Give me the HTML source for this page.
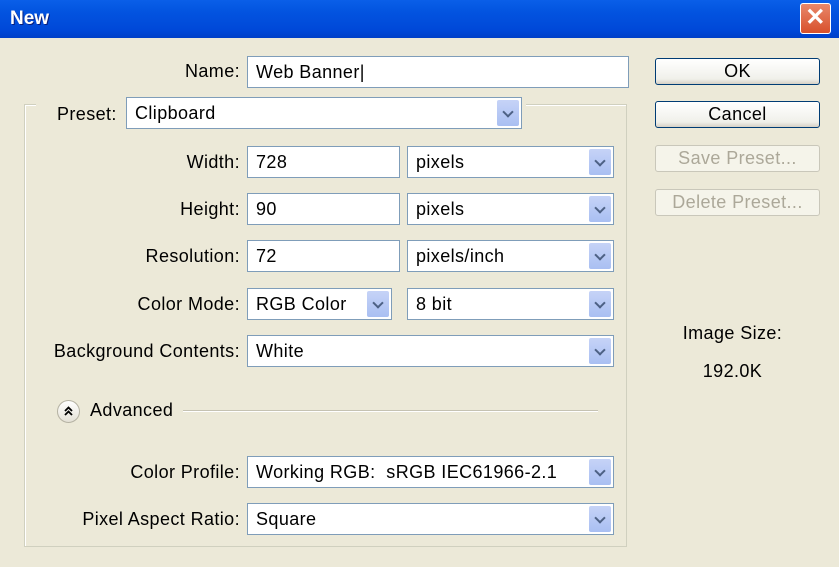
<!DOCTYPE html>
<html><head><style>
*{box-sizing:border-box;margin:0;padding:0}
body{width:839px;height:567px;background:#ECE9D8;font-family:"Liberation Sans",sans-serif;font-size:18px;letter-spacing:0.4px;color:#000;position:relative;overflow:hidden}
.t{position:absolute;top:0;left:0;width:839px;height:38px;background:linear-gradient(#0A5FE8,#0354E0 30%,#0048D8 80%,#0040C8)}
.t span{position:absolute;left:10px;top:8px;color:#fff;font-weight:bold;font-size:19px;text-shadow:1px 1px #0a1e7a;letter-spacing:0}
.x{position:absolute;left:800px;top:3px;width:31px;height:31px;background:linear-gradient(#E8876A,#D8502B);border:1px solid #fff;border-radius:3px;color:#fff;font-size:24px;text-align:center;line-height:28px;font-weight:bold}
.l{position:absolute;text-align:right;width:240px;left:0;line-height:20px}
.i{position:absolute;background:#fff;border:1px solid #7F9DB9;padding-left:8px;line-height:30px;height:32px}
.a{position:absolute;right:2px;top:2px;width:22px;height:26px;background:linear-gradient(#C6D3F7,#A9BFF2);border-radius:2px}
.a:after{content:"";position:absolute;left:7px;top:8px;width:6px;height:6px;border-right:2px solid #4D6185;border-bottom:2px solid #4D6185;transform:rotate(45deg)}
.b{position:absolute;left:655px;width:165px;height:27px;border:1px solid #003C74;border-radius:3px;background:linear-gradient(#fff,#F0F0EA 80%,#D6D0C5);text-align:center;line-height:25px}
.d{border-color:#C9C7BA;color:#ACA899;background:#F5F4EA}
.g{position:absolute;left:24px;top:104px;width:603px;height:443px;border:1px solid #D0D0BF;box-shadow:1px 1px #fff inset}
</style></head><body>
<div class="t"><span>New</span><div class="x">✕</div></div>
<div class="l" style="top:61px">Name:</div>
<div class="i" style="left:247px;top:56px;width:382px">Web Banner|</div>
<div class="b" style="top:58px">OK</div>
<div class="b" style="top:101px">Cancel</div>
<div class="b d" style="top:145px">Save Preset...</div>
<div class="b d" style="top:189px">Delete Preset...</div>
<div class="g"></div>
<div style="position:absolute;left:36px;top:96px;width:490px;height:34px;background:#ECE9D8"></div>
<div style="position:absolute;left:57px;top:104px">Preset:</div>
<div class="i" style="left:126px;top:97px;width:396px">Clipboard<div class="a"></div></div>
<div class="l" style="top:152px">Width:</div>
<div class="i" style="left:247px;top:146px;width:153px">728</div>
<div class="i" style="left:407px;top:146px;width:207px">pixels<div class="a"></div></div>
<div class="l" style="top:199px">Height:</div>
<div class="i" style="left:247px;top:193px;width:153px">90</div>
<div class="i" style="left:407px;top:193px;width:207px">pixels<div class="a"></div></div>
<div class="l" style="top:246px">Resolution:</div>
<div class="i" style="left:247px;top:240px;width:153px">72</div>
<div class="i" style="left:407px;top:240px;width:207px">pixels/inch<div class="a"></div></div>
<div class="l" style="top:294px">Color Mode:</div>
<div class="i" style="left:247px;top:288px;width:145px">RGB Color<div class="a"></div></div>
<div class="i" style="left:407px;top:288px;width:207px">8 bit<div class="a"></div></div>
<div class="l" style="top:341px">Background Contents:</div>
<div class="i" style="left:247px;top:335px;width:367px">White<div class="a"></div></div>
<div style="position:absolute;left:57px;top:400px;width:23px;height:23px;border-radius:50%;border:1px solid #B5B2A3;background:linear-gradient(#fff,#E4E1D6)"><svg width="21" height="21" viewBox="0 0 21 21"><path d="M7 10l3.5-3.5L14 10M7 14l3.5-3.5L14 14" fill="none" stroke="#000" stroke-width="1.8"/></svg></div>
<div style="position:absolute;left:90px;top:400px">Advanced</div>
<div style="position:absolute;left:183px;top:410px;width:415px;height:2px;border-top:1px solid #C5C2B2;border-bottom:1px solid #fff"></div>
<div class="l" style="top:462px">Color Profile:</div>
<div class="i" style="left:247px;top:456px;width:367px">Working RGB:&nbsp; sRGB IEC61966-2.1<div class="a"></div></div>
<div class="l" style="top:509px">Pixel Aspect Ratio:</div>
<div class="i" style="left:247px;top:503px;width:367px">Square<div class="a"></div></div>
<div style="position:absolute;left:650px;width:165px;text-align:center;top:323px">Image Size:</div>
<div style="position:absolute;left:650px;width:165px;text-align:center;top:361px">192.0K</div>
</body></html>
